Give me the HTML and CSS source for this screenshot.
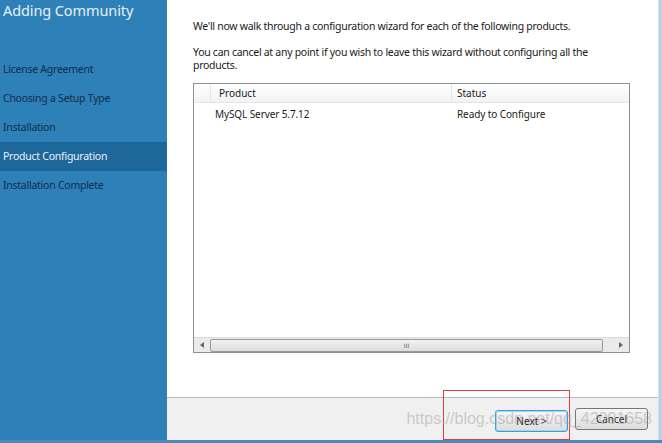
FILE: index.html
```html
<!DOCTYPE html>
<html>
<head>
<meta charset="utf-8">
<link rel="stylesheet" href="styles.css">
</head>
<body>
<div class="window">
  <div class="main">
    <aside class="sidebar">
      <div class="title">Adding Community</div>
      <ul class="steps">
        <li>License Agreement</li>
        <li>Choosing a Setup Type</li>
        <li>Installation</li>
        <li class="active">Product Configuration</li>
        <li>Installation Complete</li>
      </ul>
    </aside>
    <section class="content">
      <p class="p1">We'll now walk through a configuration wizard for each of the following products.</p>
      <p class="p2">You can cancel at any point if you wish to leave this wizard without configuring all the products.</p>
      <div class="table">
        <div class="thead">
          <div class="th c0"></div>
          <div class="th c1">Product</div>
          <div class="th c2">Status</div>
        </div>
        <div class="row">
          <div class="c0"></div>
          <div class="c1">MySQL Server 5.7.12</div>
          <div class="c2">Ready to Configure</div>
        </div>
        <div class="spacer"></div>
        <div class="hscroll">
          <div class="arrow"><svg width="4" height="6" viewBox="0 0 4 6"><path d="M4 0L0 3L4 6Z" fill="#666"/></svg></div>
          <div class="thumb"><span class="grip">III</span></div>
          <div class="track"></div>
          <div class="arrow"><svg width="4" height="6" viewBox="0 0 4 6"><path d="M0 0L4 3L0 6Z" fill="#666"/></svg></div>
        </div>
      </div>
    </section>
    <div class="frame-right"></div>
  </div>
  <footer class="footer">
    <div class="sidebar-foot"></div>
    <div class="buttons">
      <div class="btn-wrap">
        <button class="btn next">Next &gt;</button>
        <div class="redbox"></div>
      </div>
      <button class="btn cancel">Cancel</button>
      <div class="watermark">https://blog.csdn.net/qq_42091658</div>
    </div>
    <div class="frame-right"></div>
  </footer>
</div>
</body>
</html>
```
FILE: styles.css
```css
* { box-sizing: border-box; }
html, body { margin: 0; padding: 0; }
body {
  width: 662px;
  height: 443px;
  overflow: hidden;
  font-family: "Noto Sans", "Open Sans", sans-serif;
  background: #fff;
}
.window { display: flex; flex-direction: column; height: 443px; }
.main { display: flex; height: 397px; }
.sidebar {
  width: 167px;
  background: #2e80b8;
  flex-shrink: 0;
}
.title {
  color: #e6f0f8;
  font-size: 14.5px;
  padding: 0 0 0 3px;
  line-height: 20px;
  height: 55px;
  letter-spacing: -0.1px;
}
.steps { list-style: none; margin: 0; padding: 0; }
.steps li {
  height: 29px;
  line-height: 29px;
  padding-left: 3px;
  font-size: 10.5px;
  color: #0f2e48;
  letter-spacing: -0.25px;
}
.steps li.active { background: #1e679a; color: #e8f1f8; }
.content { flex: 1; padding: 0 0 0 26px; }
.content p {
  margin: 0;
  font-size: 10.5px;
  color: #1a1a1a;
  line-height: 13px;
  letter-spacing: -0.28px;
}
.p1 { padding-top: 20px; }
.p2 { padding-top: 13px; width: 420px; }
.table {
  margin-top: 11px;
  width: 437px;
  height: 270px;
  border: 1px solid #8e8f8f;
  display: flex;
  flex-direction: column;
  background: #fff;
}
.thead {
  display: flex;
  height: 19px;
  background: linear-gradient(#fff, #f2f3f4);
  border-bottom: 1px solid #e3e5e8;
  font-size: 10px;
  color: #1a1a1a;
}
.th { line-height: 18px; border-right: 1px solid #e3e5e8; }
.c0 { width: 17px; flex-shrink: 0; }
.c1 { width: 241px; padding-left: 8px; flex-shrink: 0; }
.c2 { flex: 1; padding-left: 5px; }
.thead .c2 { border-right: none; }
.row { display: flex; font-size: 10px; color: #1a1a1a; height: 22px; line-height: 22px; letter-spacing: -0.1px; }
.row .c1 { padding-left: 4px; }
.row .c2 { padding-left: 5px; }
.spacer { flex: 1; }
.hscroll {
  height: 15px;
  display: flex;
  align-items: center;
  background: #eaeaea;
  border-top: 1px solid #dcdcdc;
}
.arrow { width: 16px; display: flex; justify-content: center; align-items: center; }
.thumb {
  width: 393px;
  height: 13px;
  border: 1px solid #9a9a9a;
  border-radius: 2px;
  background: linear-gradient(#f2f2f2, #dcdcdc);
  display: flex;
  justify-content: center;
  align-items: center;
}
.grip { font-size: 6px; color: #666; font-family: "DejaVu Sans", sans-serif; }
.track { flex: 1; }
.frame-right { width: 4px; background: #b8d3e8; flex-shrink: 0; border-left: 1px solid #d6dde4; }
.footer {
  display: flex;
  height: 46px;
  border-bottom: 3px solid #4e86b4;
}
.sidebar-foot { width: 167px; background: #2e80b8; flex-shrink: 0; }
.buttons {
  flex: 1;
  background: #f0f0f0;
  border-top: 1px solid #b9b9b9;
  display: flex;
  justify-content: flex-end;
  align-items: flex-start;
  padding: 10px 10px 0 0;
  gap: 7px;
  position: relative;
}
.btn-wrap { position: relative; }
.btn {
  width: 73px;
  height: 22px;
  font-family: "Noto Sans", sans-serif;
  font-size: 10px;
  color: #1a1a1a;
  border-radius: 3px;
  background: linear-gradient(#f6f6f6, #dddddd);
  padding: 0;
}
.next { border: 1px solid #3c9fd3; box-shadow: inset 0 0 0 1px #9fd8f2; }
.cancel { border: 1px solid #777; }
.redbox {
  position: absolute;
  left: -52px;
  top: -18px;
  width: 127px;
  height: 50px;
  border: 1px solid #e53b3f;
  z-index: 2;
}
.watermark {
  position: absolute;
  right: 6px;
  top: 12px;
  font-family: "Liberation Sans", sans-serif;
  font-size: 16px;
  color: rgba(160,160,160,0.5);
  z-index: 3;
}
```
